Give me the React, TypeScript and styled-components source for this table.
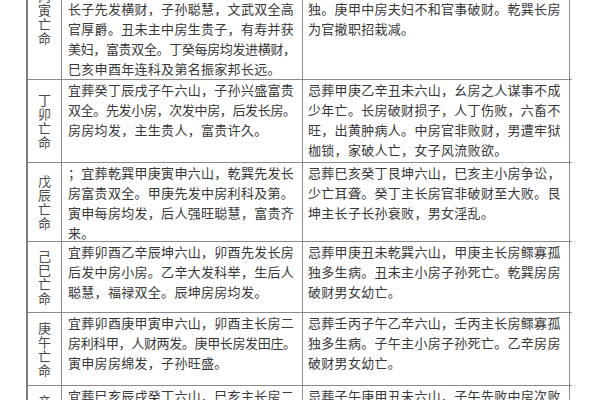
import React from "react";
import styled, { createGlobalStyle } from "styled-components";

const Global = createGlobalStyle`
  html, body {
    margin: 0;
    padding: 0;
    background: #ffffff;
    overflow: hidden;
  }
  body {
    font-family: "Noto Sans CJK SC", "Noto Sans", sans-serif;
    color: #3a3a3a;
  }
`;

const Page = styled.div`
  width: 600px;
  height: 400px;
  overflow: hidden;
`;

const Table = styled.div`
  margin: -47px 0 0 26px;
  width: 544px;
  border-left: 2px solid #7d7d7d;
  display: flex;
  flex-direction: column;
`;

const Row = styled.div<{ $h: number }>`
  display: grid;
  grid-template-columns: 34px 241px 267px;
  height: ${(p) => p.$h}px;
  border-top: 1px solid #8a8a8a;
  box-sizing: border-box;
`;

const LabelCell = styled.div`
  border-right: 1px solid #8a8a8a;
  display: flex;
  align-items: center;
  justify-content: center;
  overflow: hidden;
`;

const Label = styled.div`
  width: 14px;
  font-size: 13px;
  line-height: 14px;
  text-align: center;
  word-break: break-all;
  color: #4a4a4a;
`;

const TextCell = styled.div<{ $pad: number; $left: number }>`
  border-right: 1px solid #8a8a8a;
  padding: ${(p) => p.$pad}px 0 0 ${(p) => p.$left}px;
  overflow: hidden;
`;

const Line = styled.div<{ $tight?: boolean }>`
  font-size: 13px;
  line-height: 20px;
  height: 20px;
  white-space: nowrap;
  letter-spacing: ${(p) => (p.$tight ? "-0.35px" : "0.3px")};
  color: #383838;
`;

type L = string | { t: string; tight: boolean };

interface RowData {
  label: string;
  h: number;
  pad: number;
  mid: L[];
  right: L[];
}

const tight = (t: string) => ({ t, tight: true });

const rows: RowData[] = [
  {
    label: "丙寅亡命",
    h: 126,
    pad: 5,
    mid: [
      "宜葬甲庚丑未丁癸六山，甲庚先发长房",
      "二房，人丁大旺，富贵绵远，甲庚主",
      "长子先发横财，子孙聪慧，文武双全高",
      "官厚爵。丑未主中房生贵子，有寿并获",
      tight("美妇，富贵双全。丁癸每房均发进横财，"),
      "巳亥申酉年连科及第名振家邦长远。",
    ],
    right: [
      "忌葬乙辛卯酉乾巽六山，乙辛主小房人",
      "丁不旺，卯酉主长房退财鳏寡孤",
      "独。庚甲中房夫妇不和官事破财。乾巽长房",
      "为官撤职招栽减。",
    ],
  },
  {
    label: "丁卯亡命",
    h: 83,
    pad: 0,
    mid: [
      "宜葬癸丁辰戌子午六山，子孙兴盛富贵",
      tight("双全。先发小房，次发中房，后发长房。"),
      "房房均发，主生贵人，富贵许久。",
    ],
    right: [
      "忌葬甲庚乙辛丑未六山，幺房之人谋事不成",
      "少年亡。长房破财损子，人丁伤败，六畜不",
      "旺，出黄肿病人。中房官非败财，男遭牢狱",
      "枷锁，家破人亡，女子风流败欲。",
    ],
  },
  {
    label: "戊辰亡命",
    h: 79,
    pad: 0,
    mid: [
      "；宜葬乾巽甲庚寅申六山，乾巽先发长",
      "房富贵双全。甲庚先发中房利科及第。",
      "寅申每房均发，后人强旺聪慧，富贵齐",
      "来。",
    ],
    right: [
      "忌葬巳亥癸丁艮坤六山，巳亥主小房争讼，",
      "少亡耳聋。癸丁主长房官非破财至大败。艮",
      "坤主长子长孙衰败，男女淫乱。",
    ],
  },
  {
    label: "己巳亡命",
    h: 71,
    pad: 0,
    mid: [
      "宜葬卯酉乙辛辰坤六山，卯酉先发长房",
      "后发中房小房。乙辛大发科举，生后人",
      "聪慧，福禄双全。辰坤房房均发。",
    ],
    right: [
      "忌葬甲庚丑未乾巽六山，甲庚主长房鳏寡孤",
      "独多生病。丑未主小房子孙死亡。乾巽房房",
      "破财男女幼亡。",
    ],
  },
  {
    label: "庚午亡命",
    h: 73,
    pad: 0,
    mid: [
      "宜葬卯酉庚甲寅申六山，卯酉主长房二",
      tight("房利科甲，人财两发。庚甲长房发田庄。"),
      "寅申房房绵发，子孙旺盛。",
    ],
    right: [
      "忌葬壬丙子午乙辛六山，壬丙主长房鳏寡孤",
      "独多生病。子午主小房子孙死亡。乙辛房房",
      "破财男女幼亡。",
    ],
  },
  {
    label: "辛未亡命",
    h: 72,
    pad: 0,
    mid: [
      "宜葬巳亥辰戌癸丁六山，巳亥主长房二",
      "房发福，人丁兴旺，富贵双全。",
      "辰戌房房均发。",
    ],
    right: [
      "忌葬子午庚甲丑未六山，子午先败中房次败",
      "小房，庚甲主长房退财。",
      "丑未房房不利。",
    ],
  },
];

const renderLine = (l: L, i: number) =>
  typeof l === "string" ? (
    <Line key={i}>{l}</Line>
  ) : (
    <Line key={i} $tight={l.tight}>
      {l.t}
    </Line>
  );

export default function App() {
  return (
    <Page>
      <Global />
      <Table>
        {rows.map((r) => (
          <Row key={r.label} $h={r.h}>
            <LabelCell>
              <Label>{r.label}</Label>
            </LabelCell>
            <TextCell $pad={r.pad} $left={6}>
              {r.mid.map(renderLine)}
            </TextCell>
            <TextCell $pad={r.pad} $left={5}>
              {r.right.map(renderLine)}
            </TextCell>
          </Row>
        ))}
      </Table>
    </Page>
  );
}
